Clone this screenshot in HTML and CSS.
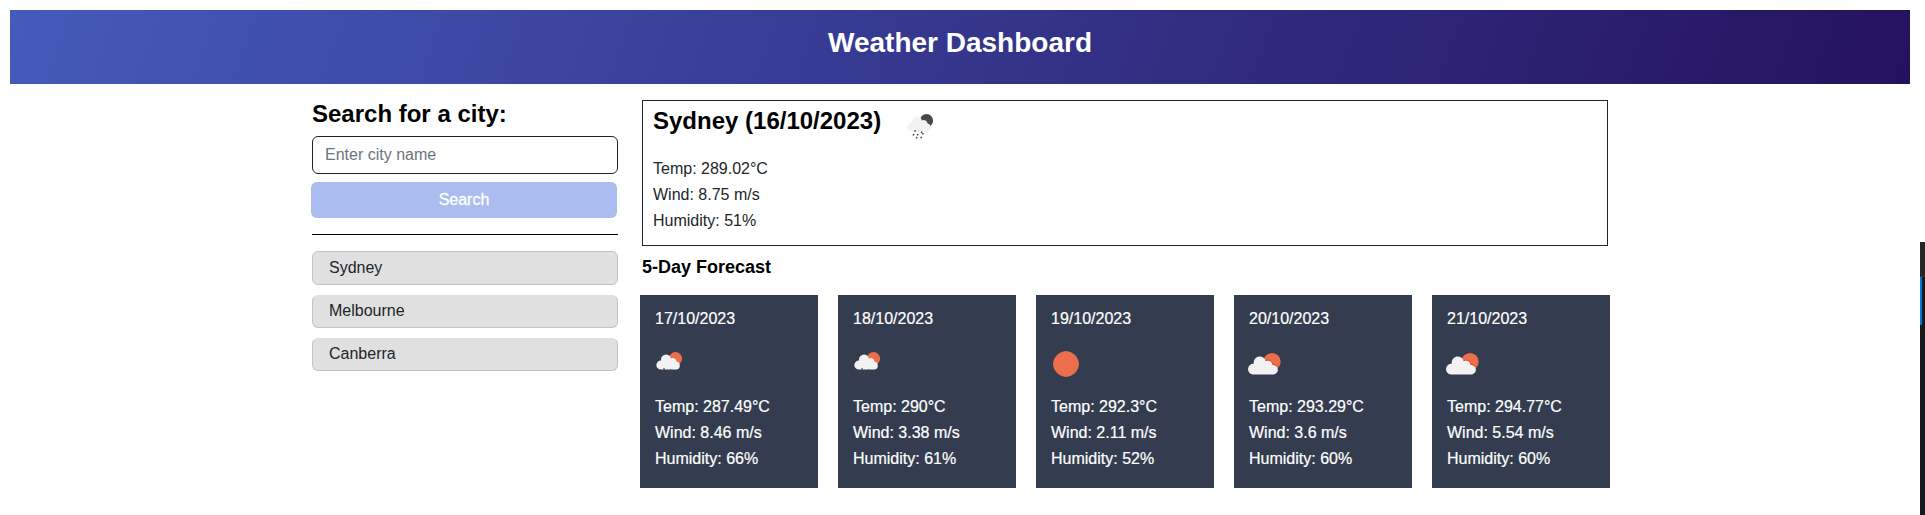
FILE: index.html
```html
<!DOCTYPE html>
<html lang="en">
<head>
<meta charset="utf-8">
<title>Weather Dashboard</title>
<link rel="stylesheet" href="styles.css">
</head>
<body>
<svg class="symbols" aria-hidden="true">
  <symbol id="partly" viewBox="0 0 33 22">
    <circle cx="24" cy="8.700" r="8.700" fill="#ec6e4c"/>
    <path d="M5 21.500a5.100 5.100 0 0 1 .8-10.700A5.800 5.800 0 0 1 17.800 8.300A4.300 4.300 0 0 1 24.700 11.900A4.800 4.800 0 0 1 25.400 21.500Z" fill="#f2f2f2"/>
    <path d="M17.500 7.700A4.900 4.900 0 0 1 24.800 11.400A5.100 5.100 0 0 1 29.500 14" fill="none" stroke="#dc4b2b" stroke-width="1"/>
  </symbol>
  <symbol id="rain" viewBox="0 0 27 26">
    <circle cx="19.500" cy="6.600" r="6.600" fill="currentColor"/>
    <path d="M4.500 17.500a4.400 4.400 0 0 1 .6-8.900A4.900 4.900 0 0 1 14.900 6.500A3.700 3.700 0 0 1 20.500 9.500A4.100 4.100 0 0 1 20.700 17.500Z" fill="#f2f2f2"/>
    <path d="M8.300 16.300l-.5 1.400M14.800 17.600l-.5 1.400M6.800 20l-.6 1.600M11 20l-.6 1.600M16.200 19l-.6 1.600M9.900 23l-.5 1.500M14.500 22.700l-.5 1.500" stroke="#484849" stroke-width="1.500"/>
  </symbol>
  <symbol id="sun" viewBox="0 0 26 26">
    <path d="M13 0c4 .2 6.200 1.900 9 4 2.200 2.700 3.800 5.200 4 9-.2 4-1.700 6.300-4 9-2.700 2.200-5.200 3.800-9 4-3.800-.2-6.300-1.800-9-4-2.200-2.700-3.800-5.200-4-9 .2-3.800 1.800-6.300 4-9 2.700-2.100 5.200-3.800 9-4Z" fill="#ec6e4c"/>
  </symbol>
</svg>
<header class="page-header"><h1>Weather Dashboard</h1></header>
<main class="layout">
  <aside class="sidebar">
    <h2>Search for a city:</h2>
    <input class="city-input" type="text" placeholder="Enter city name" aria-label="City">
    <button class="search-btn">Search</button>
    <hr class="divider">
    <div class="history">
      <button>Sydney</button>
      <button>Melbourne</button>
      <button>Canberra</button>
    </div>
  </aside>
  <section class="content">
    <div class="current">
      <div class="current-title">
        <h2>Sydney (16/10/2023)</h2>
        <svg class="icon-rain night"><use href="#rain"/></svg>
      </div>
      <p>Temp: 289.02°C</p>
      <p>Wind: 8.75 m/s</p>
      <p>Humidity: 51%</p>
    </div>
    <h3>5-Day Forecast</h3>
    <div class="forecast">
      <article class="card">
        <p>17/10/2023</p>
        <div class="card-icon"><svg class="icon-rain"><use href="#rain"/></svg></div>
        <p>Temp: 287.49°C</p><p>Wind: 8.46 m/s</p><p>Humidity: 66%</p>
      </article>
      <article class="card">
        <p>18/10/2023</p>
        <div class="card-icon"><svg class="icon-rain"><use href="#rain"/></svg></div>
        <p>Temp: 290°C</p><p>Wind: 3.38 m/s</p><p>Humidity: 61%</p>
      </article>
      <article class="card">
        <p>19/10/2023</p>
        <div class="card-icon"><svg class="icon-sun"><use href="#sun"/></svg></div>
        <p>Temp: 292.3°C</p><p>Wind: 2.11 m/s</p><p>Humidity: 52%</p>
      </article>
      <article class="card">
        <p>20/10/2023</p>
        <div class="card-icon"><svg class="icon-partly"><use href="#partly"/></svg></div>
        <p>Temp: 293.29°C</p><p>Wind: 3.6 m/s</p><p>Humidity: 60%</p>
      </article>
      <article class="card">
        <p>21/10/2023</p>
        <div class="card-icon"><svg class="icon-partly"><use href="#partly"/></svg></div>
        <p>Temp: 294.77°C</p><p>Wind: 5.54 m/s</p><p>Humidity: 60%</p>
      </article>
    </div>
  </section>
</main>
<div class="edge-panel"><div class="edge-marker"></div></div>
</body>
</html>
```
FILE: styles.css
```css
* { box-sizing: border-box; }
body {
  margin: 0;
  padding: 10px 15px 0 10px;
  background: #fff;
  color: #212529;
  font: 16px/26px "Liberation Sans", Arial, sans-serif;
  overflow: hidden;
}
h1, h2, h3, p { margin: 0; }
.symbols { position: absolute; width: 0; height: 0; }

.page-header {
  height: 74px;
  padding-top: 16px;
  background: linear-gradient(110deg, #455abb, #25125e);
  color: #fff;
  text-align: center;
}
h1 { font-size: 28px; line-height: 34px; }

.layout {
  display: flex;
  align-items: flex-start;
  gap: 24px;
  padding: 16px 0 0 302px;
}
.sidebar {
  display: flex;
  flex-direction: column;
  width: 306px;
}
h2 { color: #000; font-size: 24px; line-height: 28px; }
.city-input {
  height: 38px;
  margin-top: 8px;
  padding: 0 12px 1px;
  border: 1px solid #212529;
  border-radius: 6px;
  background: #fff;
  font: inherit;
}
.city-input::placeholder { color: #6c757d; opacity: 1; }
.search-btn {
  height: 36px;
  margin: 8px 1px 0 -1px;
  padding: 0 0 1px;
  border: 0;
  border-radius: 6px;
  background: #abbdee;
  color: #fff;
  font: inherit;
  -webkit-text-stroke: 0.3px #fff;
}
.divider {
  width: 100%;
  height: 1px;
  margin: 16px 0;
  border: 0;
  background: #000;
}
.history { display: grid; gap: 10px; grid-template-rows: 34px 33px 33px; }
.history button {
  padding: 0 16px 1px;
  border: 1px solid #c3c3c3;
  border-radius: 6px;
  background: #e0e0e0;
  color: #212529;
  font: inherit;
  text-align: left;
}
.history button + button { padding-bottom: 2px; border-top-color: #e0e0e0; }

.content { width: 968px; }
.current {
  width: 966px;
  height: 146px;
  padding: 6px 10px;
  border: 1px solid #212529;
}
.current-title {
  display: flex;
  align-items: flex-start;
  gap: 26px;
  height: 49px;
}
.current-title .icon-rain { margin: 7px 0 0; }
h3 { margin-top: 8px; color: #000; font-size: 18px; line-height: 26px; }

.forecast {
  display: grid;
  grid-template-columns: repeat(5, 178px);
  gap: 20px;
  width: 970px;
  margin: 15px 0 0 -2px;
}
.card {
  height: 193px;
  padding: 11px 15px;
  background: #333d4f;
  color: #fff;
  -webkit-text-stroke: 0.2px #fff;
}
.card-icon { height: 62px; padding-top: 19px; }
.card-icon svg { display: block; -webkit-text-stroke: 0; }
.icon-rain { width: 27px; height: 26px; margin: 1px 0 0 1px; color: #ec6e4c; }
.night { color: #484849; }
.icon-sun { width: 26px; height: 26px; margin-left: 2px; }
.icon-partly { width: 33px; height: 22px; margin: 2px 0 0 -1px; }

/* Sliver of the docked panel that overlaps the right edge */
.edge-panel {
  position: absolute;
  top: 242px;
  right: 0;
  width: 5px;
  height: 273px;
  padding-top: 35px;
  background: linear-gradient(#252525 34px, #3a3a3a 34px 35px, #171819 35px);
}
.edge-marker { width: 2px; height: 48px; background: #0078d4; }
```
